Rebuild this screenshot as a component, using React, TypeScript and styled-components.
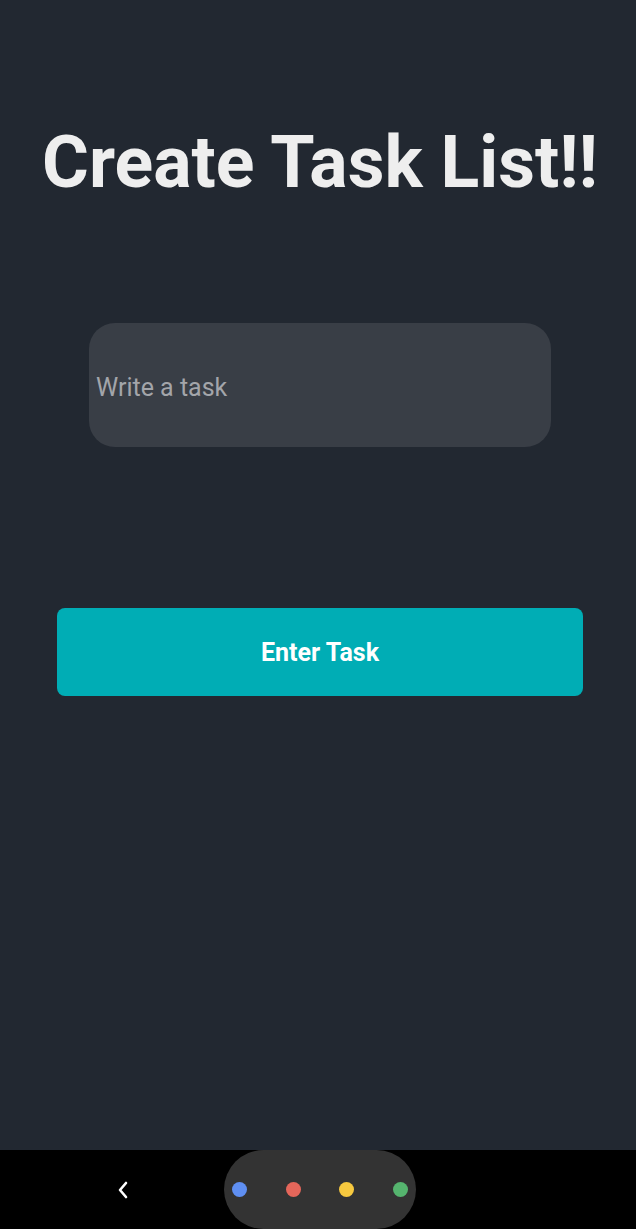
import React from "react";
import styled, { createGlobalStyle } from "styled-components";

const Global = createGlobalStyle`
  html, body { margin: 0; padding: 0; background: #222831; }
  body { font-family: Roboto, "Noto Sans", sans-serif; }
  #root { min-height: 100vh; }
`;

const Screen = styled.div`
  width: 636px;
  height: 1229px;
  background: #222831;
  display: flex;
  flex-direction: column;
  overflow: hidden;
`;

const Content = styled.main`
  flex: 1;
  display: flex;
  flex-direction: column;
  align-items: center;
  padding-top: 118px;
  padding-left: 4px;
`;

const Title = styled.h1`
  margin: 0;
  font-family: Roboto, sans-serif;
  font-weight: 700;
  font-size: 71.6px;
  line-height: 90px;
  color: #eeeeee;
  white-space: nowrap;
`;

const TaskInput = styled.input`
  margin-top: 115px;
  width: 462px;
  height: 124px;
  box-sizing: border-box;
  border: none;
  outline: none;
  border-radius: 26px;
  background: #393e46;
  padding: 4px 7px 0;
  font-family: Roboto, sans-serif;
  font-size: 25px;
  color: #eeeeee;
  &::placeholder { color: #a3a5aa; }
`;

const EnterButton = styled.button`
  margin-top: 161px;
  width: 526px;
  height: 88px;
  border: none;
  border-radius: 8px;
  background: #00adb5;
  color: #ffffff;
  font-family: Roboto, sans-serif;
  font-weight: 700;
  font-size: 25px;
  cursor: pointer;
`;

const NavBar = styled.nav`
  height: 79px;
  background: #000000;
  display: flex;
  align-items: center;
  flex-shrink: 0;
`;

const BackButton = styled.div`
  width: 224px;
  display: flex;
  justify-content: flex-end;
  padding-right: 94px;
  box-sizing: border-box;
`;

const Pill = styled.div`
  width: 192px;
  height: 79px;
  border-radius: 40px;
  background: #333333;
  display: flex;
  align-items: center;
  justify-content: space-between;
  padding: 0 8px;
  box-sizing: border-box;
`;

const Dot = styled.span<{ $color: string }>`
  width: 15px;
  height: 15px;
  border-radius: 50%;
  background: ${(p) => p.$color};
`;

export default function App() {
  return (
    <Screen>
      <Global />
      <Content>
        <Title>Create Task List!!</Title>
        <TaskInput placeholder="Write a task" />
        <EnterButton>Enter Task</EnterButton>
      </Content>
      <NavBar>
        <BackButton>
          <svg width="14" height="20" viewBox="0 0 14 20">
            <path d="M10 3 L4 10 L10 17" stroke="#ffffff" strokeWidth="2.6" fill="none" strokeLinecap="round" strokeLinejoin="round" />
          </svg>
        </BackButton>
        <Pill>
          <Dot $color="#5f8ff2" />
          <Dot $color="#e5665a" />
          <Dot $color="#f7c93f" />
          <Dot $color="#55b46e" />
        </Pill>
      </NavBar>
    </Screen>
  );
}
